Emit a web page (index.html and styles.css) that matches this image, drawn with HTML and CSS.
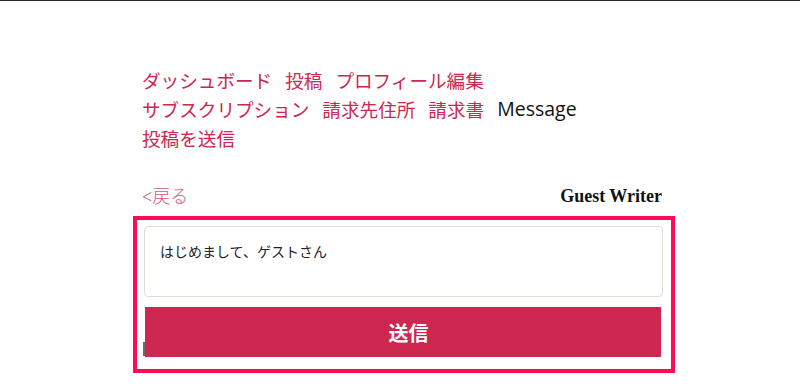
FILE: index.html
```html
<!DOCTYPE html>
<html lang="ja">
<head>
<meta charset="utf-8">
<title>Message</title>
<link rel="stylesheet" href="styles.css">
</head>
<body>
<div class="topline"></div>
<div class="page">
  <nav class="nav">
    <a class="link" href="#">ダッシュボード</a>
    <a class="link" href="#">投稿</a>
    <a class="link" href="#">プロフィール編集</a>
    <a class="link" href="#">サブスクリプション</a>
    <a class="link" href="#">請求先住所</a>
    <a class="link" href="#">請求書</a>
    <span class="current">Message</span>
    <a class="link" href="#">投稿を送信</a>
  </nav>
  <div class="backrow">
    <a class="back" href="#">&lt;戻る</a>
    <span class="writer">Guest Writer</span>
  </div>
  <form class="msgbox">
    <span class="ghost"></span>
    <textarea class="msg">はじめまして、ゲストさん</textarea>
    <button class="send" type="button">送信</button>
  </form>
</div>
</body>
</html>
```

FILE: styles.css
```css
html, body {
  margin: 0;
  padding: 0;
  background: #ffffff;
}
body {
  font-family: "Noto Sans CJK JP", "Noto Sans", sans-serif;
}
.topline {
  height: 1px;
  background: #23292d;
}
.page {
  width: 520px;
  margin-left: 142px;
  padding-top: 64px;
}
.nav {
  width: 460px;
  font-size: 18.6px;
  line-height: 29px;
  display: flex;
  flex-wrap: wrap;
  column-gap: 13px;
}
.link {
  color: #cc2651;
  text-decoration: none;
}
.current {
  color: #111111;
  font-family: "Open Sans", "Noto Sans", sans-serif;
  font-size: 19.5px;
}
.backrow {
  margin-top: 31px;
  height: 24px;
  display: flex;
  justify-content: space-between;
  align-items: center;
}
.back {
  color: #d4587a;
  font-size: 18px;
  font-weight: 300;
  text-decoration: none;
  font-family: "Liberation Serif", "Noto Sans CJK JP", serif;
}
.writer {
  font-family: "Liberation Serif", serif;
  font-weight: bold;
  font-size: 18px;
  color: #111111;
  margin-top: 2px;
}
.msgbox {
  position: relative;
  margin: 9px 0 0 -9px;
  width: 521px;
  border: 4px solid #ff0a54;
  padding: 6px 6px 12px 7px;
  display: flex;
  flex-direction: column;
}
.ghost {
  position: absolute;
  left: 6px;
  top: 122px;
  width: 2px;
  height: 14px;
  background: #6b6b6b;
}
.msg {
  box-sizing: border-box;
  width: 519px;
  height: 71px;
  margin: 0;
  border: 1px solid #e2ded6;
  border-radius: 4px;
  padding: 14px 15px;
  font-family: "Noto Sans CJK JP", "Noto Sans", sans-serif;
  font-size: 14px;
  line-height: 20px;
  color: #222222;
  resize: none;
  outline: none;
}
.send {
  position: relative;
  width: 516px;
  height: 50px;
  margin: 10px 0 0 1px;
  border: none;
  background: #cc2651;
  color: #ffffff;
  font-family: "Noto Sans CJK JP", "Noto Sans", sans-serif;
  font-size: 20px;
  font-weight: bold;
  padding: 0 0 0 11px;
}
```
